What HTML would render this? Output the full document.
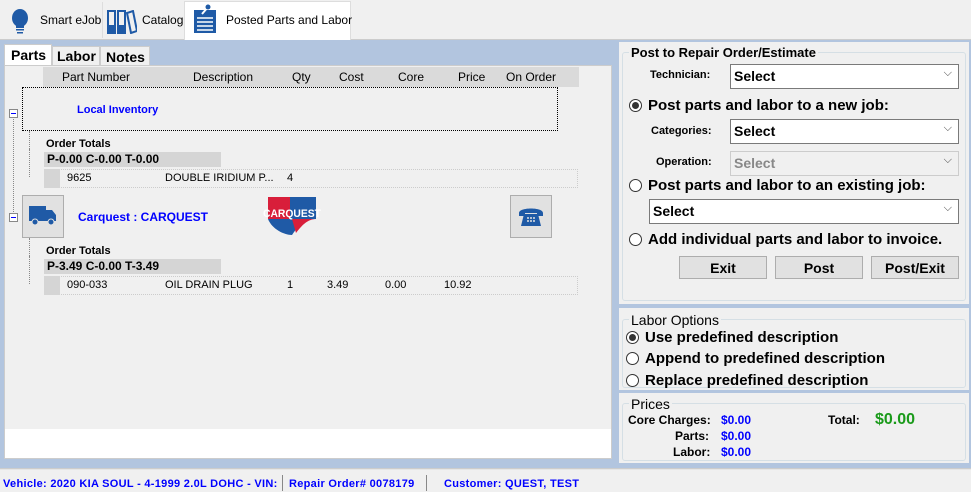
<!DOCTYPE html>
<html><head><style>
*{box-sizing:border-box;margin:0;padding:0}
body{width:971px;height:492px;position:relative;background:#f0f0f0;font-family:"Liberation Sans",sans-serif;font-size:12px;overflow:hidden;color:#000}
.a{position:absolute}
.b{font-weight:bold}
.grp{position:absolute;border:1px solid #d5dfe5;border-radius:3px;background:#f0f0f0}
.gt{position:absolute;top:-8px;left:6px;background:#f0f0f0;padding:0 2px;font-size:13px}
.sel{position:absolute;background:#fff;border:1px solid #7a7a7a;height:25px;font-weight:bold;font-size:14px;padding:3px 0 0 3px}
.sel:after{content:"⌵";position:absolute;right:6px;top:2px;font-size:11px;color:#444;font-weight:normal}
.rad{position:absolute;width:13px;height:13px;border:1px solid #333;border-radius:50%;background:#fff}
.rad.on:after{content:"";position:absolute;left:2px;top:2px;width:7px;height:7px;border-radius:50%;background:#333}
.btn{position:absolute;background:#e1e1e1;border:1px solid #adadad;font-weight:bold;font-size:14px;text-align:center;padding-top:3px;height:23px}
.rt{font-weight:bold;font-size:15px}
.h span{position:absolute;top:3px}
.st{font-size:11px;color:#0000ff;font-weight:bold;letter-spacing:0.3px}
</style></head><body>
<div class="a" style="left:0;top:0;width:971px;height:40px;background:#f0f0f0;border-bottom:1px solid #ccc"></div>
<div class="a" style="left:102px;top:2px;width:1px;height:36px;background:#ddd"></div>
<div class="a" style="left:184px;top:1px;width:167px;height:39px;background:#fff;border:1px solid #ddd;border-bottom:none"></div>
<svg class="a" style="left:10px;top:9px" width="20" height="26"><ellipse cx="10" cy="9" rx="8" ry="9" fill="#1f5aa6"/><rect x="6" y="15" width="8" height="4" fill="#1f5aa6"/><rect x="6" y="20" width="8" height="1.5" fill="#1f5aa6"/><rect x="7" y="23" width="6" height="1.5" fill="#1f5aa6"/></svg>
<div class="a" style="left:40px;top:13px;font-size:12px">Smart eJob</div>
<svg class="a" style="left:107px;top:10px" width="30" height="24"><rect x="1" y="1" width="7" height="22" fill="none" stroke="#1f5aa6" stroke-width="2"/><rect x="11" y="1" width="7" height="22" fill="none" stroke="#1f5aa6" stroke-width="2"/><path d="M20 3l6-2 4 20-6 2z" fill="none" stroke="#1f5aa6" stroke-width="2"/><rect x="1" y="15" width="7" height="8" fill="#1f5aa6"/><rect x="11" y="15" width="7" height="8" fill="#1f5aa6"/></svg>
<div class="a" style="left:142px;top:13px">Catalog</div>
<svg class="a" style="left:193px;top:4px" width="24" height="30"><rect x="1" y="6" width="22" height="23" fill="#1f5aa6"/><g stroke="#fff" stroke-width="1.5"><line x1="4" y1="14" x2="20" y2="14"/><line x1="4" y1="18" x2="20" y2="18"/><line x1="4" y1="22" x2="20" y2="22"/><line x1="4" y1="26" x2="20" y2="26"/></g><line x1="9" y1="10" x2="15" y2="3" stroke="#fff" stroke-width="2"/><circle cx="15" cy="3" r="2.5" fill="#1f5aa6"/></svg>
<div class="a" style="left:226px;top:13px">Posted Parts and Labor</div>
<div class="a" style="left:0;top:40px;width:971px;height:428px;background:#b2c5df"></div>
<div class="a" style="left:4px;top:44px;width:48px;height:22px;background:#fff;border:1px solid #ccc;border-bottom:none"></div>
<div class="a b" style="left:11px;top:47px;font-size:14px">Parts</div>
<div class="a" style="left:52px;top:46px;width:48px;height:20px;background:#f0f0f0;border:1px solid #ccc"></div>
<div class="a b" style="left:57px;top:48px;font-size:14px">Labor</div>
<div class="a" style="left:100px;top:46px;width:50px;height:20px;background:#f0f0f0;border:1px solid #ccc"></div>
<div class="a b" style="left:106px;top:49px;font-size:14px">Notes</div>
<div class="a" style="left:4px;top:65px;width:608px;height:394px;background:#f0f0f0;border:1px solid #ccc"></div>
<div class="a" style="left:5px;top:429px;width:606px;height:29px;background:#fff"></div>
<div class="a h" style="left:43px;top:67px;width:536px;height:20px;background:#dadada;font-size:12px">
<span style="left:19px">Part Number</span><span style="left:150px">Description</span><span style="left:249px">Qty</span><span style="left:296px">Cost</span><span style="left:355px">Core</span><span style="left:415px">Price</span><span style="left:463px">On Order</span></div>
<div class="a" style="left:22px;top:87px;width:536px;height:44px;border:1px dotted #000"></div>
<div class="a b" style="left:77px;top:104px;color:#0000ff;font-size:11px">Local Inventory</div>
<div class="a" style="left:9px;top:109px;width:9px;height:9px;border:1px solid #888;background:#fff"></div>
<div class="a" style="left:11px;top:113px;width:5px;height:1px;background:#00f"></div>
<div class="a" style="left:13px;top:119px;height:95px;border-left:1px dotted #888"></div>
<div class="a" style="left:29px;top:131px;height:18px;border-left:1px dotted #888"></div>
<div class="a" style="left:29px;top:149px;height:28px;border-left:1px dotted #888"></div>
<div class="a b" style="left:46px;top:138px;font-size:11px">Order Totals</div>
<div class="a b" style="left:44px;top:152px;width:177px;height:15px;background:#d5d5d5;font-size:12px;padding-left:3px">P-0.00 C-0.00 T-0.00</div>
<div class="a" style="left:44px;top:169px;width:534px;height:19px;border:1px dotted #ccc"></div>
<div class="a" style="left:44px;top:169px;width:16px;height:19px;background:#d5d5d5"></div>
<div class="a" style="left:67px;top:172px;font-size:11px">9625</div>
<div class="a" style="left:165px;top:172px;font-size:11px">DOUBLE IRIDIUM P...</div>
<div class="a" style="left:287px;top:172px;font-size:11px">4</div>
<div class="a" style="left:9px;top:213px;width:9px;height:9px;border:1px solid #888;background:#fff"></div>
<div class="a" style="left:11px;top:217px;width:5px;height:1px;background:#00f"></div>
<div class="a" style="left:22px;top:195px;width:42px;height:43px;background:#e1e1e1;border:1px solid #adadad"></div>
<svg class="a" style="left:29px;top:206px" width="28" height="20"><rect x="0" y="0" width="17" height="15" fill="#1f5aa6"/><path d="M17 4h6l4 5v6H17z" fill="#1f5aa6"/><circle cx="6" cy="16" r="3" fill="#1f5aa6" stroke="#e1e1e1"/><circle cx="22" cy="16" r="3" fill="#1f5aa6" stroke="#e1e1e1"/></svg>
<div class="a b" style="left:78px;top:210px;color:#0000ff;font-size:12px">Carquest : CARQUEST</div>
<svg class="a" style="left:260px;top:195px" width="64" height="43"><path d="M8 2h48v22c-10 0-16 4-24 16-8 0-20-6-24-16z" fill="#1f5aa6"/><path d="M8 2h22v22H8z" fill="#d81e3a"/><path d="M32 24h24c-8 0-14 6-20 14z" fill="#d81e3a"/><text x="3" y="22" font-family="Liberation Sans" font-weight="bold" font-size="11" fill="#fff" textLength="58" lengthAdjust="spacingAndGlyphs">CARQUEST</text></svg>
<div class="a" style="left:510px;top:195px;width:42px;height:43px;background:#e1e1e1;border:1px solid #adadad"></div>
<svg class="a" style="left:518px;top:205px" width="26" height="22"><path d="M1 8c0-6 24-6 24 0v3h-6V8H7v3H1z" fill="#1f5aa6"/><path d="M6 9h14l3 12H3z" fill="#1f5aa6"/><g fill="#e1e1e1"><circle cx="10" cy="13" r="1"/><circle cx="13" cy="13" r="1"/><circle cx="16" cy="13" r="1"/><circle cx="10" cy="16" r="1"/><circle cx="13" cy="16" r="1"/><circle cx="16" cy="16" r="1"/></g></svg>
<div class="a" style="left:29px;top:238px;height:18px;border-left:1px dotted #888"></div>
<div class="a" style="left:29px;top:256px;height:28px;border-left:1px dotted #888"></div>
<div class="a b" style="left:46px;top:245px;font-size:11px">Order Totals</div>
<div class="a b" style="left:44px;top:259px;width:177px;height:15px;background:#d5d5d5;font-size:12px;padding-left:3px">P-3.49 C-0.00 T-3.49</div>
<div class="a" style="left:44px;top:276px;width:534px;height:19px;border:1px dotted #ccc"></div>
<div class="a" style="left:44px;top:276px;width:16px;height:19px;background:#d5d5d5"></div>
<div class="a" style="left:67px;top:279px;font-size:11px">090-033</div>
<div class="a" style="left:165px;top:279px;font-size:11px">OIL DRAIN PLUG</div>
<div class="a" style="left:287px;top:279px;font-size:11px">1</div>
<div class="a" style="left:327px;top:279px;font-size:11px">3.49</div>
<div class="a" style="left:385px;top:279px;font-size:11px">0.00</div>
<div class="a" style="left:444px;top:279px;font-size:11px">10.92</div>
<div class="a" style="left:619px;top:42px;width:350px;height:262px;background:#f0f0f0"></div>
<div class="grp" style="left:622px;top:52px;width:344px;height:249px"><div class="gt" style="font-size:13px;font-weight:bold">Post to Repair Order/Estimate</div></div>
<div class="a b" style="left:650px;top:69px;font-size:11px">Technician:</div>
<div class="sel" style="left:730px;top:64px;width:229px">Select</div>
<div class="rad on" style="left:629px;top:99px"></div>
<div class="a rt" style="left:648px;top:97px">Post parts and labor to a new job:</div>
<div class="a b" style="left:651px;top:125px;font-size:11px">Categories:</div>
<div class="sel" style="left:730px;top:119px;width:229px">Select</div>
<div class="a b" style="left:656px;top:156px;font-size:11px">Operation:</div>
<div class="sel" style="left:730px;top:151px;width:229px;border-color:#ccc;color:#888;background:#f0f0f0">Select</div>
<div class="rad" style="left:629px;top:179px"></div>
<div class="a rt" style="left:648px;top:177px">Post parts and labor to an existing job:</div>
<div class="sel" style="left:649px;top:199px;width:310px">Select</div>
<div class="rad" style="left:629px;top:233px"></div>
<div class="a rt" style="left:648px;top:231px">Add individual parts and labor to invoice.</div>
<div class="btn" style="left:679px;top:256px;width:88px">Exit</div>
<div class="btn" style="left:775px;top:256px;width:88px">Post</div>
<div class="btn" style="left:871px;top:256px;width:88px">Post/Exit</div>
<div class="a" style="left:619px;top:308px;width:350px;height:82px;background:#f0f0f0"></div>
<div class="grp" style="left:622px;top:319px;width:344px;height:69px"><div class="gt" style="font-size:14px">Labor Options</div></div>
<div class="rad on" style="left:626px;top:331px"></div>
<div class="a rt" style="left:645px;top:329px">Use predefined description</div>
<div class="rad" style="left:626px;top:352px"></div>
<div class="a rt" style="left:645px;top:350px">Append to predefined description</div>
<div class="rad" style="left:626px;top:374px"></div>
<div class="a rt" style="left:645px;top:372px">Replace predefined description</div>
<div class="a" style="left:619px;top:393px;width:350px;height:70px;background:#f0f0f0"></div>
<div class="grp" style="left:622px;top:403px;width:344px;height:58px"><div class="gt" style="font-size:14px">Prices</div></div>
<div class="a b" style="left:628px;top:413px;font-size:12px">Core Charges:</div>
<div class="a b" style="left:721px;top:413px;font-size:12px;color:#0000ff">$0.00</div>
<div class="a b" style="left:675px;top:429px;font-size:12px">Parts:</div>
<div class="a b" style="left:721px;top:429px;font-size:12px;color:#0000ff">$0.00</div>
<div class="a b" style="left:673px;top:445px;font-size:12px">Labor:</div>
<div class="a b" style="left:721px;top:445px;font-size:12px;color:#0000ff">$0.00</div>
<div class="a b" style="left:828px;top:413px;font-size:12px">Total:</div>
<div class="a b" style="left:875px;top:411px;font-size:16px;color:#1a9a1a">$0.00</div>
<div class="a" style="left:0;top:468px;width:971px;height:2px;background:#e6e6e6;border-top:1px solid #ccc"></div>
<div class="a st" style="left:3px;top:478px">Vehicle: 2020 KIA SOUL - 4-1999 2.0L DOHC - VIN:</div>
<div class="a" style="left:282px;top:475px;width:1px;height:16px;background:#888"></div>
<div class="a st" style="left:289px;top:478px">Repair Order# 0078179</div>
<div class="a" style="left:426px;top:475px;width:1px;height:16px;background:#888"></div>
<div class="a st" style="left:444px;top:478px">Customer: QUEST, TEST</div>
</body></html>
